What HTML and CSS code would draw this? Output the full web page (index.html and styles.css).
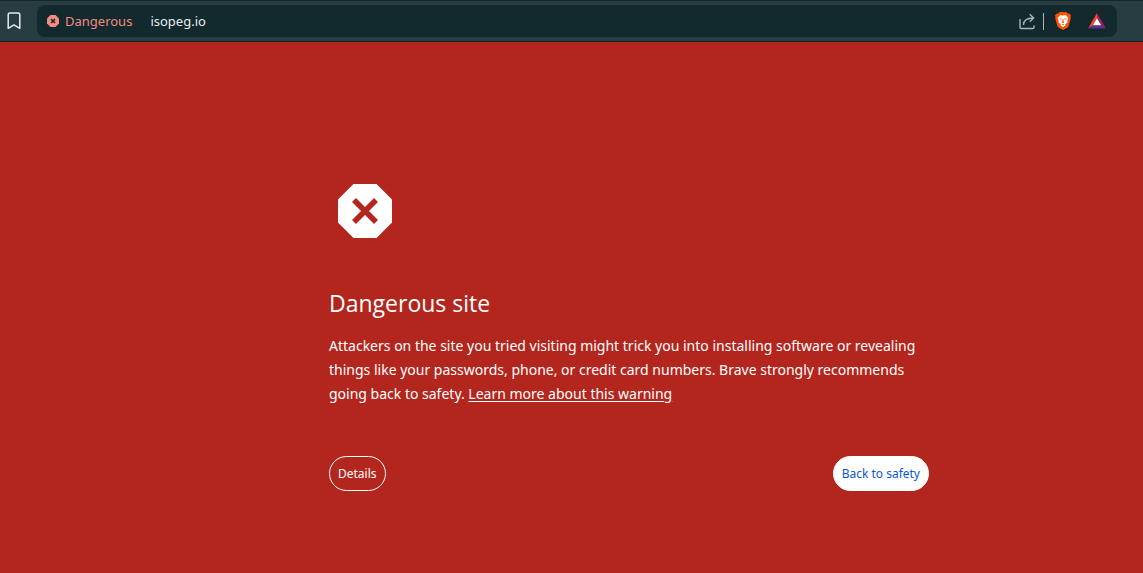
FILE: index.html
```html
<!DOCTYPE html>
<html lang="en">
<head>
<meta charset="utf-8">
<meta name="viewport" content="width=device-width, initial-scale=1">
<title>Dangerous site</title>
<link rel="stylesheet" href="styles.css">
</head>
<body>
<header class="toolbar">
  <button class="icon-button bookmark" type="button" aria-label="Bookmark">
    <svg width="14" height="18" viewBox="0 0 14 18" fill="none" stroke="#e4eaeb" stroke-width="1.5" stroke-linejoin="round"><path d="M1.2 16.3V2.6Q1.2 1 2.8 1h8.4q1.6 0 1.6 1.6v13.7L7 12.900z"/></svg>
  </button>
  <div class="address-bar">
    <button class="security" type="button">
      <svg width="12" height="12" viewBox="0 0 12 12"><path fill="#f28b82" d="M3.5 0h5L12 3.5v5L8.500 12h-5L0 8.500v-5z"/><path d="M4 4l4 4M8 4L4 8" stroke="#12292d" stroke-width="1.5"/></svg>
      <span>Dangerous</span>
    </button>
    <input class="url" type="text" value="isopeg.io" aria-label="Address">
    <div class="actions">
      <button class="icon-button share" type="button" aria-label="Share">
        <svg width="17" height="17" viewBox="0 0 17 17" fill="none" stroke="#aab5b7" stroke-width="1.4"><path d="M1 6v8.200Q1 15.500 2.300 15.500h11.400Q15 15.500 15 14.200V12.500M4.500 12C4.500 7.500 7 5 14.500 5M10.800 1.200L14.600 5l-3.800 3.800"/></svg>
      </button>
      <button class="icon-button shields" type="button" aria-label="Brave Shields">
        <svg width="16" height="18" viewBox="0 0 16 18"><path fill="#ff5000" d="M4.700 0h6.600l1.400 1.600 1.500-.2L16 3.600l-.5 1.700.2 1.200-2 7.300q-.3 1-1.200 1.700L8 18l-4.500-2.500q-.9-.7-1.200-1.700L.3 6.500l.2-1.200L0 3.600l1.800-2.200 1.500.2z"/><path fill="#fff" d="M5.300 3L8 3.500 10.700 3l2.600 3-1 2.800.3 1.500-2.300 1.900.3 1.100L8 15.300l-2.600-2 .3-1.100-2.300-1.900.3-1.500-1-2.800z"/><path fill="#ff5000" d="M4.400 6.200l2.600.6-.5.800-1.600-.4zm7.200 0l-2.600.6.500.8 1.600-.4zM7.600 7h.8l.2 2.500.8.600L8 11.200l-1.400-1.100.8-.6zM6.500 12.500L8 11.900l1.500.6L8 13.300z"/></svg>
      </button>
      <button class="icon-button rewards" type="button" aria-label="Brave Rewards">
        <svg width="18" height="16" viewBox="0 0 18 16"><path fill="#ff4724" d="M9 0v5.200L4.800 12.300 0 15.500z"/><path fill="#9e1f63" d="M9 0l9 15.500-4.800-3.200L9 5.200z"/><path fill="#662d91" d="M0 15.500l4.800-3.200h8.400l4.800 3.200z"/><path fill="#fff" d="M9 5.200l4.200 7.100H4.800z"/></svg>
      </button>
    </div>
  </div>
</header>
<main class="warning">
  <div class="content">
    <svg class="warning-icon" width="54" height="54" viewBox="0 0 54 54" role="img" aria-label="Danger"><path fill="#fff" d="M15.500 0h23L54 15.500v23L38.500 54h-23L0 38.500v-23z"/><path d="M16 16l22 22M38 16L16 38" stroke="#b3261e" stroke-width="5.600"/></svg>
    <h1>Dangerous site</h1>
    <p>Attackers on the site you tried visiting might trick you into installing software or revealing things like your passwords, phone, or credit card numbers. Brave strongly recommends going back to safety. <a href="#learn-more">Learn more about this warning</a></p>
    <div class="buttons">
      <button class="button details" type="button">Details</button>
      <button class="button primary" type="button">Back to safety</button>
    </div>
  </div>
</main>
</body>
</html>
```
FILE: styles.css
```css
* {
  box-sizing: border-box;
}

body {
  margin: 0;
  min-height: 100vh;
  background: #b3261e;
  color: #fff;
  font-family: "Noto Sans", "Open Sans", sans-serif;
}

button,
input {
  margin: 0;
  padding: 0;
  border: 0;
  background: none;
  color: inherit;
  font: inherit;
}

button {
  cursor: pointer;
}

svg {
  display: block;
  flex: none;
}

.toolbar {
  display: flex;
  align-items: center;
  gap: 16px;
  height: 42px;
  padding: 0 26px 0 7px;
  background: #283d42;
  border-top: 1px solid #10272b;
  border-bottom: 1px solid #10272b;
}

.address-bar {
  display: flex;
  flex: 1;
  align-items: center;
  min-width: 0;
  height: 32px;
  padding: 0 11px 0 10px;
  border-radius: 8px;
  background: #12292d;
  font-size: 13px;
}

.security {
  display: flex;
  align-items: center;
  gap: 6px;
  color: #f28b82;
}

.url {
  flex: 1;
  min-width: 0;
  height: 24px;
  margin-left: 18px;
  color: #e6edee;
}

.actions {
  display: flex;
  align-items: center;
}

.share {
  padding-right: 7px;
  border-right: 1px solid #aab5b7;
}

.shields {
  margin-left: 11px;
}

.rewards {
  margin-left: 17px;
}

.warning {
  display: flex;
  justify-content: center;
  padding: 142px 0 48px 115px;
}

.content {
  width: 100%;
  max-width: 600px;
}

.warning-icon {
  margin-left: 9px;
}

h1 {
  margin: 49px 0 15px;
  font-family: "Open Sans", "Noto Sans", sans-serif;
  font-size: 23px;
  font-weight: 400;
  line-height: 32px;
}

p {
  margin: 0;
  font-size: 14px;
  line-height: 24px;
}

a {
  color: inherit;
  text-underline-offset: 2px;
}

.buttons {
  display: flex;
  justify-content: space-between;
  margin-top: 50px;
}

.button {
  height: 35px;
  padding: 0 8px;
  border: 1px solid #fff;
  border-radius: 18px;
  font-size: 12px;
}

.primary {
  background: #fff;
  color: #0b57d0;
}
```
